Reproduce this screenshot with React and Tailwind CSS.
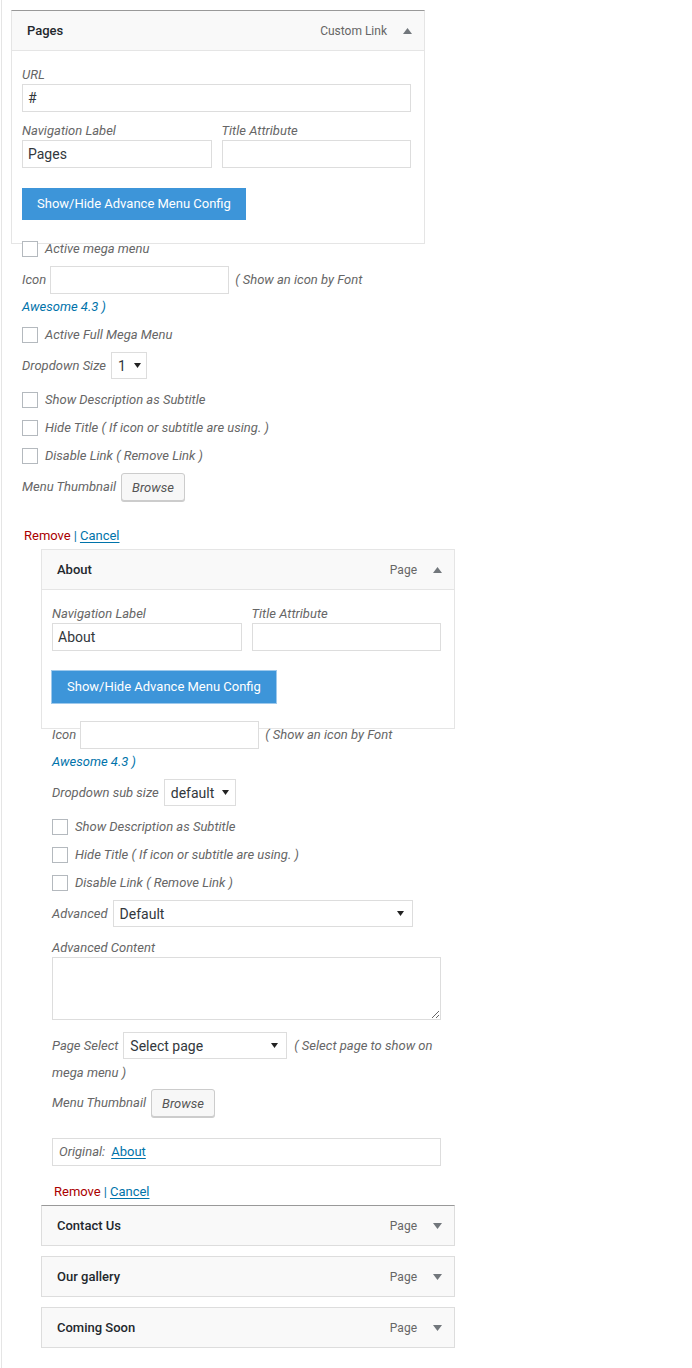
import React from 'react';

const labelCls = "italic text-[#666] text-[13px] leading-[18px]";
const inputCls = "h-[28px] border border-[#ddd] bg-white px-[5px] text-[14px] text-[#32373c] leading-[26px]";

function Caret({ up = false }) {
    return (
        <svg width="9" height="6" viewBox="0 0 9 6">
            {up ? <polygon points="0,6 9,6 4.5,0" fill="#72777c" /> : <polygon points="0,0 9,0 4.5,6" fill="#72777c" />}
        </svg>
    );
}

function SmallCaret() {
    return (
        <svg width="7" height="5" viewBox="0 0 7 5">
            <polygon points="0,0 7,0 3.5,5" fill="#222" />
        </svg>
    );
}

function ItemHeader({ title, type, up }) {
    return (
        <div className="flex items-center h-[39px] bg-[#f9f9f9] pl-[15px] pr-[12px]">
            <span className="font-medium text-[13px] text-[#23282d]">{title}</span>
            <span className="ml-auto text-[12px] text-[#666] mr-[16px]">{type}</span>
            <Caret up={up} />
        </div>
    );
}

function Check({ children, className = "" }) {
    return (
        <div className={`flex items-center h-[16px] ${className}`}>
            <span className="w-[16px] h-[16px] border border-[#b4b9be] bg-white shrink-0" />
            <span className={`${labelCls} ml-[7px]`}>{children}</span>
        </div>
    );
}

function Select({ value, className = "" }) {
    return (
        <div className={`flex items-center h-[27px] border border-[#ddd] bg-white pl-[6px] pr-[8px] text-[14px] text-[#32373c] ${className}`}>
            <span className="pt-[2px]">{value}</span>
            <span className="ml-auto pl-[8px]"><SmallCaret /></span>
        </div>
    );
}

function Browse() {
    return (
        <button className="h-[28px] px-[10px] border border-[#ccc] rounded-[3px] bg-[#f7f7f7] shadow-[0_1px_0_#ccc] italic text-[13px] text-[#555] pt-[2px]">
            Browse
        </button>
    );
}

function Actions({ className = "" }) {
    return (
        <div className={`h-[18px] text-[13px] leading-[18px] ${className}`}>
            <span className="text-[#a00]">Remove</span>
            <span className="text-[#0073aa] mx-[3px]">|</span>
            <span className="text-[#0073aa] underline underline-offset-2">Cancel</span>
        </div>
    );
}

function IconRow({ className = "" }) {
    return (
        <>
            <div className={`flex items-center h-[28px] ${className}`}>
                <span className={labelCls}>Icon</span>
                <div className={`${inputCls} w-[179px] ml-[4px]`} />
                <span className={`${labelCls} ml-[6px]`}>( Show an icon by Font</span>
            </div>
            <div className="italic text-[13px] leading-[18px] text-[#0073aa] mt-[4px]">Awesome 4.3 )</div>
        </>
    );
}

export default function App() {
    return (
        <div className="min-h-[1368px] ml-px border-l border-[#e5e5e5] bg-white pt-[10px] pl-[9px] font-['Roboto','Liberation_Sans',sans-serif]">
            {/* Pages item, expanded */}
            <div className="w-[414px] h-[234px] border border-[#e5e5e5] border-t-[#999]">
                <div className="border-b border-[#e5e5e5]">
                    <ItemHeader title="Pages" type="Custom Link" up />
                </div>
                <div className="pl-[10px] pr-[13px] pt-[15px] flex flex-col">
                    <div className={labelCls}>URL</div>
                    <div className={`${inputCls} w-full`}>#</div>
                    <div className="flex gap-[10px] mt-[10px]">
                        <div className="flex-1">
                            <div className={labelCls}>Navigation Label</div>
                            <div className={inputCls}>Pages</div>
                        </div>
                        <div className="flex-1">
                            <div className={labelCls}>Title Attribute</div>
                            <div className={inputCls} />
                        </div>
                    </div>
                    <button className="self-start mt-[20px] h-[32px] px-[15px] bg-[#3d95d9] text-white text-[13px]">
                        Show/Hide Advance Menu Config
                    </button>
                    <Check className="mt-[21px]">Active mega menu</Check>
                    <IconRow className="mt-[9px]" />
                    <Check className="mt-[11px]">Active Full Mega Menu</Check>
                    <div className="flex items-center mt-[9px]">
                        <span className={labelCls}>Dropdown Size</span>
                        <Select value="1" className="w-[36px] ml-[5px]" />
                    </div>
                    <Check className="mt-[13px]">Show Description as Subtitle</Check>
                    <Check className="mt-[12px]">Hide Title ( If icon or subtitle are using. )</Check>
                    <Check className="mt-[12px]">Disable Link ( Remove Link )</Check>
                    <div className="flex items-center mt-[9px]">
                        <span className={labelCls}>Menu Thumbnail</span>
                        <span className="ml-[5px]"><Browse /></span>
                    </div>
                    <Actions className="mt-[26px] ml-[2px]" />
                </div>
            </div>

            {/* About item, expanded */}
            <div className="ml-[30px] mt-[305px] w-[414px]">
                <div className="h-[180px] border border-[#e5e5e5]">
                    <div className="border-b border-[#e5e5e5]">
                        <ItemHeader title="About" type="Page" up />
                    </div>
                    <div className="pl-[10px] pr-[13px] pt-[15px] flex flex-col">
                        <div className="flex gap-[10px]">
                            <div className="flex-1">
                                <div className={labelCls}>Navigation Label</div>
                                <div className={inputCls}>About</div>
                            </div>
                            <div className="flex-1">
                                <div className={labelCls}>Title Attribute</div>
                                <div className={inputCls} />
                            </div>
                        </div>
                        <button className="self-start -ml-[1px] mt-[19px] h-[34px] px-[15px] bg-[#3d95d9] border border-[#9ec9ec] text-white text-[13px]">
                            Show/Hide Advance Menu Config
                        </button>
                        <IconRow className="mt-[17px]" />
                        <div className="flex items-center mt-[8px]">
                            <span className={labelCls}>Dropdown sub size</span>
                            <Select value="default" className="w-[72px] ml-[5px]" />
                        </div>
                        <Check className="mt-[13px]">Show Description as Subtitle</Check>
                        <Check className="mt-[12px]">Hide Title ( If icon or subtitle are using. )</Check>
                        <Check className="mt-[12px]">Disable Link ( Remove Link )</Check>
                        <div className="flex items-center mt-[9px]">
                            <span className={labelCls}>Advanced</span>
                            <Select value="Default" className="w-[300px] ml-[5px]" />
                        </div>
                        <div className={`${labelCls} mt-[12px]`}>Advanced Content</div>
                        <textarea className="w-full h-[63px] border border-[#ddd] bg-white resize-y block" />
                        <div className="flex items-center mt-[12px]">
                            <span className={labelCls}>Page Select</span>
                            <Select value="Select page" className="w-[164px] ml-[5px]" />
                            <span className={`${labelCls} ml-[7px]`}>( Select page to show on</span>
                        </div>
                        <div className={`${labelCls} mt-[5px]`}>mega menu )</div>
                        <div className="flex items-center mt-[7px]">
                            <span className={labelCls}>Menu Thumbnail</span>
                            <span className="ml-[5px]"><Browse /></span>
                        </div>
                        <div className="mt-[21px] h-[28px] border border-[#ddd] flex items-center px-[6px] text-[13px]">
                            <span className="italic text-[#666]">Original:</span>
                            <span className="ml-[6px] text-[#0073aa] underline underline-offset-2">About</span>
                        </div>
                        <Actions className="mt-[17px] ml-[2px]" />
                    </div>
                </div>

                {/* collapsed items */}
                <div className="mt-[476px] flex flex-col gap-[10px]">
                    <div className="border border-[#ddd] border-t-[#999]">
                        <ItemHeader title="Contact Us" type="Page" />
                    </div>
                    <div className="border border-[#ddd]">
                        <ItemHeader title="Our gallery" type="Page" />
                    </div>
                    <div className="border border-[#ddd]">
                        <ItemHeader title="Coming Soon" type="Page" />
                    </div>
                </div>
            </div>
        </div>
    );
}
